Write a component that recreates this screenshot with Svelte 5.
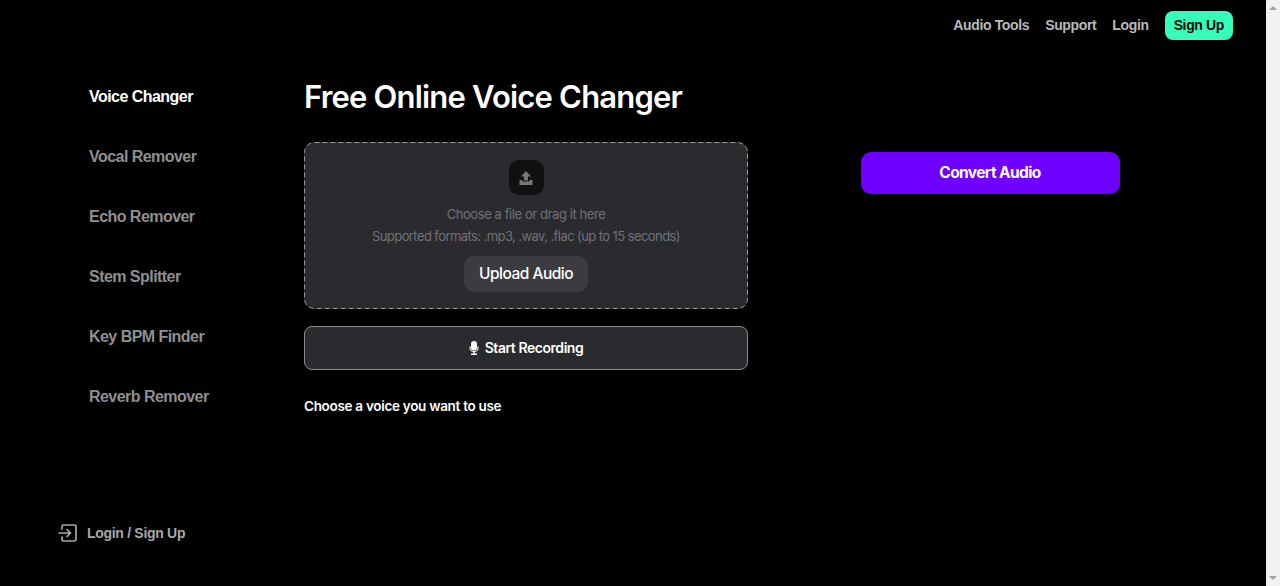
<script lang="ts">
	const tools = ['Voice Changer', 'Vocal Remover', 'Echo Remover', 'Stem Splitter', 'Key BPM Finder', 'Reverb Remover'];
	const navLinks = ['Audio Tools', 'Support', 'Login'];
</script>

<div class="page">
	<div class="shell">
		<header class="topbar">
			{#each navLinks as link}
				<a class="nav-link" href="#top">{link}</a>
			{/each}
			<a class="signup" href="#top">Sign Up</a>
		</header>

		<div class="body">
			<aside class="sidebar">
				<nav class="tools">
					{#each tools as tool, index}
						<a class="tool" class:active={index === 0} href="#top">{tool}</a>
					{/each}
				</nav>
				<a class="account" href="#top">
					<svg width="20" height="20" viewBox="0 0 20 20" fill="none" stroke="currentColor" stroke-width="1.7" stroke-linecap="round" stroke-linejoin="round">
						<path d="M4 6V3.500A1.500 1.500 0 0 1 5.500 2h11A1.500 1.500 0 0 1 18 3.500v13a1.500 1.500 0 0 1-1.500 1.500h-11A1.500 1.500 0 0 1 4 16.500V14" />
						<path d="M1 10h11M9 6.500 12.500 10 9 13.500" />
					</svg>
					<span>Login / Sign Up</span>
				</a>
			</aside>

			<main class="main">
				<h1>Free Online Voice Changer</h1>
				<div class="columns">
					<section class="left">
						<div class="dropzone">
							<svg class="dashes" width="444" height="167" fill="none">
								<rect x="0.500" y="0.500" width="443" height="166" rx="10" stroke="#9a9a9a" stroke-dasharray="5 3" />
							</svg>
							<div class="upload-icon">
								<svg width="14" height="14" viewBox="0 0 14 14" fill="currentColor">
									<path d="M7 0 12 5.500H9V9.500H5V5.500H2z" />
									<path d="M0.500 9H3.500V10.500H10.500V9H13.500V14H0.500z" />
								</svg>
							</div>
							<p class="hint first">Choose a file or drag it here</p>
							<p class="hint formats">Supported formats: .mp3, .wav, .flac (up to 15 seconds)</p>
							<button class="upload-btn">Upload Audio</button>
						</div>
						<button class="record-btn">
							<svg width="10" height="14" viewBox="0 0 10 14" fill="currentColor">
								<rect x="2" y="0" width="6" height="9.500" rx="3" />
								<path d="M0.500 5.500H1.500V6.500A3.500 3.500 0 0 0 8.500 6.500V5.500H9.500V6.500A4.500 4.500 0 0 1 5.700 11V12.600H8V14H2V12.600H4.300V11A4.500 4.500 0 0 1 0.500 6.500z" />
							</svg>
							Start Recording
						</button>
						<h2>Choose a voice you want to use</h2>
					</section>
					<section class="right">
						<button class="convert-btn">Convert Audio</button>
					</section>
				</div>
			</main>
		</div>
	</div>

	<div class="scrollbar">
		<span class="arrow up"></span>
		<span class="arrow down"></span>
	</div>
</div>

<style>
	:global(body) {
		margin: 0;
		background: #000;
	}

	.page {
		display: flex;
		height: 586px;
		overflow: hidden;
		background: #000;
		font-family: Inter, 'Liberation Sans', sans-serif;
	}

	.shell {
		flex: 1;
		display: flex;
		flex-direction: column;
		min-width: 0;
	}

	.topbar {
		display: flex;
		justify-content: flex-end;
		align-items: center;
		gap: 16px;
		height: 50px;
		padding-right: 33px;
	}

	.nav-link {
		color: #b9b9b9;
		font-family: 'Liberation Sans', sans-serif;
		font-size: 14px;
		font-weight: 700;
		letter-spacing: -0.36px;
		text-decoration: none;
	}

	.signup {
		display: flex;
		align-items: center;
		height: 29px;
		padding: 0 9px;
		border-radius: 8px;
		background: #35ffb8;
		color: #0a0a0a;
		font-family: 'Liberation Sans', sans-serif;
		font-size: 14px;
		font-weight: 700;
		letter-spacing: -0.36px;
		text-decoration: none;
	}

	.body {
		flex: 1;
		display: flex;
		min-height: 0;
	}

	.sidebar {
		width: 304px;
		flex-shrink: 0;
		display: flex;
		flex-direction: column;
		justify-content: space-between;
		padding: 37px 0 43px 58px;
		box-sizing: border-box;
	}

	.tools {
		display: flex;
		flex-direction: column;
		gap: 40px;
		padding-left: 31px;
	}

	.tool {
		height: 20px;
		line-height: 20px;
		color: #8f8f8f;
		font-family: 'Liberation Sans', sans-serif;
		font-size: 16px;
		font-weight: 700;
		letter-spacing: -0.54px;
		text-decoration: none;
	}

	.tool.active {
		color: #fff;
	}

	.account {
		display: flex;
		align-items: center;
		gap: 9px;
		color: #a8a8a8;
		font-family: 'Liberation Sans', sans-serif;
		font-size: 14px;
		font-weight: 700;
		letter-spacing: -0.3px;
		text-decoration: none;
	}

	.main {
		flex: 1;
		min-width: 0;
	}

	h1 {
		margin: 27px 0 25px;
		color: #fff;
		font-size: 31px;
		line-height: 40px;
		font-weight: 600;
		letter-spacing: -0.81px;
	}

	.columns {
		display: flex;
		gap: 112.500px;
	}

	.left {
		width: 444px;
		flex-shrink: 0;
	}

	.dropzone {
		position: relative;
		display: flex;
		flex-direction: column;
		align-items: center;
		box-sizing: border-box;
		height: 167px;
		padding-top: 18px;
		border-radius: 10px;
		background: #2a2a2f;
	}

	.dashes {
		position: absolute;
		top: 0;
		left: 0;
	}

	.upload-icon {
		display: flex;
		align-items: center;
		justify-content: center;
		width: 35px;
		height: 35px;
		border-radius: 10px;
		background: #111113;
		color: #77777c;
	}

	.hint {
		margin: 0;
		color: #727277;
		font-size: 13px;
		line-height: 22px;
		letter-spacing: -0.42px;
	}

	.hint.first {
		margin-top: 8px;
	}

	.hint.formats {
		letter-spacing: -0.58px;
	}

	.upload-btn {
		height: 36px;
		margin-top: 9px;
		padding: 0 15px 2px;
		border: none;
		border-radius: 10px;
		background: #3b3b40;
		color: #fff;
		font-family: inherit;
		font-size: 15.500px;
		font-weight: 500;
		letter-spacing: -0.5px;
	}

	.record-btn {
		display: flex;
		align-items: center;
		justify-content: center;
		gap: 6px;
		width: 100%;
		height: 44px;
		margin-top: 17px;
		padding-bottom: 2px;
		border: 1px solid #8c8c8c;
		border-radius: 8px;
		background: #2a2a2f;
		color: #fff;
		font-family: inherit;
		font-size: 14px;
		font-weight: 600;
		letter-spacing: -0.45px;
	}

	h2 {
		margin: 27px 0 0;
		color: #fff;
		font-size: 13.500px;
		line-height: 18px;
		font-weight: 600;
		letter-spacing: -0.3px;
	}

	.right {
		padding-top: 10px;
	}

	.convert-btn {
		display: block;
		width: 259px;
		height: 42px;
		padding-bottom: 2px;
		border: none;
		border-radius: 10px;
		background: #6f00ff;
		color: #fff;
		font-family: inherit;
		font-size: 15.500px;
		font-weight: 700;
		letter-spacing: -0.6px;
	}

	.scrollbar {
		width: 14px;
		flex-shrink: 0;
		display: flex;
		flex-direction: column;
		justify-content: space-between;
		align-items: center;
		padding: 6px 0;
		box-sizing: border-box;
		background: #f1f1f1;
	}

	.arrow {
		width: 0;
		height: 0;
		border-left: 4px solid transparent;
		border-right: 4px solid transparent;
	}

	.arrow.up {
		border-bottom: 4px solid #a3a3a3;
	}

	.arrow.down {
		border-top: 4px solid #a3a3a3;
	}
</style>
